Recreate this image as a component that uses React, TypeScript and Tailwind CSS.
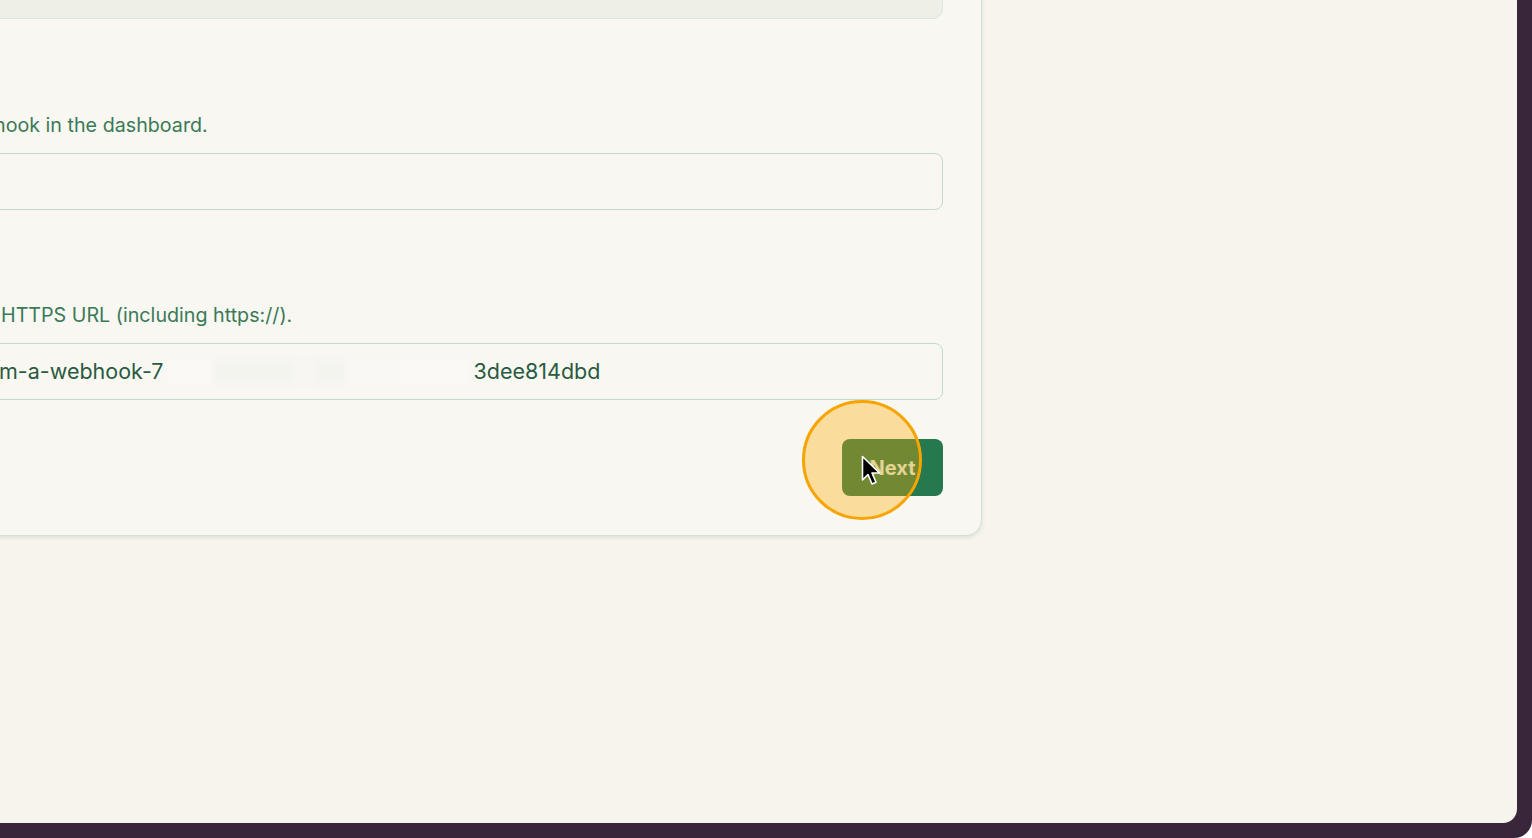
import React from "react"

function Cursor() {
  return (
    <svg width="22" height="34" viewBox="0 0 22 34" className="absolute left-[861px] top-[455px]">
      <path
        d="M1.5 1.5 L1.5 25 L7 19.5 L11 29 L15 27.3 L11 18 L18.5 18 Z"
        fill="#000"
        stroke="#fff"
        strokeWidth="1.6"
        strokeLinejoin="round"
      />
    </svg>
  )
}

function BlurredValue() {
  return (
    <span className="mx-[5px] flex h-[26px] w-[300px] blur-[3px]">
      <span className="w-[45px] bg-[#faf9f6]" />
      <span className="w-[80px] bg-[#f4f4ef]" />
      <span className="w-[25px] bg-[#f7f6f2]" />
      <span className="w-[28px] bg-[#f4f4ef]" />
      <span className="w-[55px] bg-[#f9f8f4]" />
      <span className="w-[67px] bg-[#faf9f5]" />
    </span>
  )
}

export default function App() {
  return (
    <div
      className="h-[838px] w-[1532px] overflow-hidden bg-white"
      style={{ fontFamily: "Inter, 'Liberation Sans', sans-serif" }}
    >
      <div className="h-[838px] w-[1532px] overflow-hidden rounded-br-[18px] bg-[#3a263b] pr-[15px] pb-[15px]">
        <div className="relative h-[823px] w-[1517px] overflow-hidden rounded-br-[14px] bg-[#f7f4ed]">
          {/* form card */}
          <div className="-mt-[42px] -ml-[20px] w-[1002px] rounded-br-[16px] border border-[#d0e2d6] bg-[#f8f7f2] pt-[8px] pr-[38px] pb-[39px] pl-[3px] shadow-[0_2px_4px_rgba(60,90,70,0.12)]">
            <div className="h-[52px] rounded-[10px] border border-[#d8e6dc] bg-[#eef0e8]" />

            <p className="mt-[93px] ml-[10px] whitespace-nowrap text-[19.7px] leading-[26px] text-[#3b7a56]">
              hook in the dashboard.
            </p>
            <div className="mt-[15px] h-[57px] rounded-[8px] border border-[#c2dacb] bg-[#f8f7f2]" />

            <p className="mt-[92px] pl-[17px] whitespace-nowrap text-[19.7px] leading-[26px] text-[#3b7a56]">
              HTTPS URL (including https://).
            </p>
            <div className="mt-[15px] flex h-[57px] items-center rounded-[8px] border border-[#c2dacb] bg-[#f8f7f2] pl-[14px] text-[21.5px] text-[#2a5a40]">
              <span>m-a-webhook-7</span>
              <BlurredValue />
              <span>3dee814dbd</span>
            </div>

            <div className="mt-[39px] flex justify-end">
              <button className="h-[57px] w-[101px] rounded-[8px] bg-[#26784f] text-[20px] font-bold text-[#d6eae0]">
                Next
              </button>
            </div>
          </div>

          {/* click highlight */}
          <div className="absolute left-[802px] top-[400px] h-[120px] w-[120px] rounded-full border-[3px] border-[#f6a400] bg-[rgba(255,170,0,0.35)]" />
          <Cursor />
        </div>
      </div>
    </div>
  )
}
